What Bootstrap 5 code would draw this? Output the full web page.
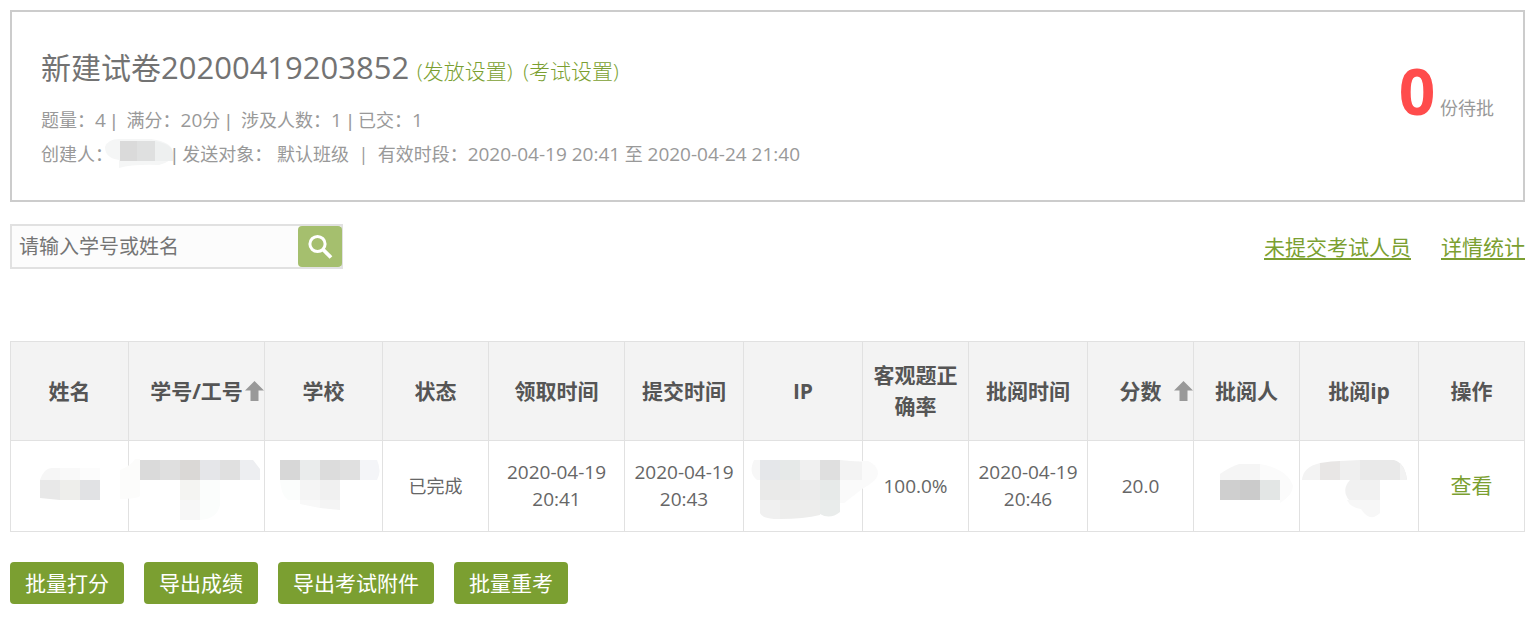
<!DOCTYPE html>
<html lang="zh-CN">
<head>
<meta charset="utf-8">
<meta name="viewport" content="width=device-width, initial-scale=1">
<title>试卷批阅</title>
<link href="https://cdn.jsdelivr.net/npm/bootstrap@5.3.0/dist/css/bootstrap.min.css" rel="stylesheet">
<style>
  body { font-family: "Open Sans", "Noto Sans CJK SC", sans-serif; color: #666; background: #fff; }
  a { color: #7b9f31; }
  a:hover { color: #5f7d22; }
  .page { padding: 10px 15px 22px 10px; }
  .exam-box { border: 2px solid #ccc; padding: 35px 29px 28px; }
  .exam-title { font-size: 30px; line-height: 40px; margin-bottom: 13px; color: #737373; font-weight: 400; }
  .exam-title .num { font-size: 31px; }
  .exam-title a { font-size: 21px; text-decoration: none; font-weight: 300; }
  .exam-title a + a { margin-left: 3px; }
  .meta { font-size: 18px; line-height: 33px; color: #999; }
  .num { font-size: 19px; }
  .bar { font-family: "Liberation Sans", sans-serif; padding: 0 1px; }
  .pending { font-size: 18px; line-height: 88px; color: #999; }
  .pending strong { font-size: 64px; color: #ff4c4c; }
  .toolbar { margin-top: 22px; }
  .search { width: 333px; height: 45px; border: 2px solid #e1e1e1; background: #fcfcfc; }
  .search .form-control { font-size: 20px; padding: 0 7px; border: 0; border-radius: 0; background: transparent; min-width: 0; line-height: 40px; }
  .search .form-control::placeholder { color: #757575; opacity: 1; }
  .search button { width: 44px; margin-right: -1px; border: 0; border-radius: 4px; background: #a5bf6e; padding: 0; }
  .side-links { font-size: 21px; gap: 30px; line-height: 32px; }
  .side-links a { text-underline-offset: 3px; text-decoration-thickness: 2px; }
  .result-table { table-layout: fixed; margin: 72px 0 30px; border-color: #e1e1e1; text-align: center; color: #666; }
  .result-table th { position: relative; height: 99px; padding: 0 9px; background: #f3f3f3; font-size: 21px; line-height: 31px; color: #555; border-bottom-color: #ececec; vertical-align: middle; }
  .result-table td { height: 91px; padding: 0 8px; font-size: 18px; line-height: 27px; color: #666; vertical-align: middle; }
  .result-table td.masked { padding: 0; }
  .result-table td a { font-size: 21px; text-decoration: none; }
  .masked svg { display: block; width: 100%; height: 90px; overflow: visible; position: relative; }
  .sort { position: absolute; right: 0; top: 39px; border: 0; padding: 0; background: none; line-height: 0; }
  .w-a { width: 106px; } .w-b { width: 118px; } .w-c { width: 119px; } .w-d { width: 136px; }
  .actions { gap: 20px; }
  .actions .btn { --bs-btn-color: #fff; --bs-btn-bg: #7b9f31; --bs-btn-hover-color: #fff; --bs-btn-hover-bg: #6a8a28; font-size: 21px; line-height: 42px; padding: 0 15px; border: 0; border-radius: 4px; }
</style>
</head>
<body>
<main class="page">
  <section class="exam-box d-flex justify-content-between">
    <div>
      <h1 class="exam-title">新建试卷<span class="num">20200419203852</span> <a href="#">(发放设置)</a> <a href="#">(考试设置)</a></h1>
      <div class="meta">题量：<span class="num">4</span> <span class="bar">|</span>&nbsp; 满分：<span class="num">20</span>分 <span class="bar">|</span>&nbsp; 涉及人数：<span class="num">1</span> <span class="bar">|</span> 已交：<span class="num">1</span></div>
      <div class="meta">创建人：<svg class="align-middle" width="58" height="20" viewBox="0 7 58 20" overflow="visible" aria-hidden="true"><path d="M-8 8Q-5 0 6 0H38Q60 3 60 14Q59 23 46 26Q20 25 6 29V21Q-8 19-8 8Z" fill="#f5f6f6"/><path d="M7 2H24V22H7Z" fill="#dadada"/><path d="M24 2H42V22H24Z" fill="#dfe0e0"/><path d="M42 2Q59 5 60 14V22H42Z" fill="#eef0f0"/></svg><span class="bar">|</span> 发送对象： 默认班级&nbsp; |&nbsp; 有效时段：<span class="num">2020-04-19 20:41</span> 至 <span class="num">2020-04-24 21:40</span></div>
    </div>
    <div class="pending text-nowrap"><strong>0</strong> 份待批</div>
  </section>

  <div class="toolbar d-flex justify-content-between align-items-center">
    <form class="search d-flex" role="search">
      <input class="form-control shadow-none" type="text" placeholder="请输入学号或姓名" aria-label="请输入学号或姓名">
      <button type="button" class="flex-shrink-0 d-flex align-items-center justify-content-center" aria-label="搜索">
        <svg width="26" height="26" viewBox="0 0 26 26" fill="none" stroke="#fff" aria-hidden="true"><circle cx="10.5" cy="10" r="7.6" stroke-width="3"/><path d="M16 15.5L24 23.5" stroke-width="3.8"/></svg>
      </button>
    </form>
    <nav class="side-links d-flex"><a href="#">未提交考试人员</a><a href="#">详情统计</a></nav>
  </div>

  <table class="table table-bordered result-table">
    <colgroup><col class="w-b"><col class="w-d"><col class="w-b"><col class="w-a"><col class="w-d"><col class="w-c"><col class="w-c"><col class="w-a"><col class="w-c"><col class="w-a"><col class="w-a"><col class="w-c"><col class="w-a"></colgroup>
    <thead>
      <tr>
        <th scope="col">姓名</th>
        <th scope="col">学号/工号<button type="button" class="sort" aria-label="按学号排序"><svg width="19" height="21" viewBox="0 0 19 21"><path d="M9.500 0L19 9.500H13.500V20H5.500V9.500H0Z" fill="#999"/></svg></button></th>
        <th scope="col">学校</th>
        <th scope="col">状态</th>
        <th scope="col">领取时间</th>
        <th scope="col">提交时间</th>
        <th scope="col">IP</th>
        <th scope="col">客观题正确率</th>
        <th scope="col">批阅时间</th>
        <th scope="col">分数<button type="button" class="sort" aria-label="按分数排序"><svg width="19" height="21" viewBox="0 0 19 21"><path d="M9.500 0L19 9.500H13.500V20H5.500V9.500H0Z" fill="#999"/></svg></button></th>
        <th scope="col">批阅人</th>
        <th scope="col">批阅ip</th>
        <th scope="col">操作</th>
      </tr>
    </thead>
    <tbody>
      <tr>
        <td class="masked"><svg aria-hidden="true"><path d="M29 39Q33 27 41 27H49V39Z" fill="#f6f6f6"/><path d="M49 27H69V39H49Z" fill="#f9f9f9"/><path d="M69 27H89V39H69Z" fill="#fcfcfc"/><path d="M29 39H49V59L29 57Z" fill="#e8e8e8"/><path d="M49 39H69V59H49Z" fill="#eeeeeb"/><path d="M69 39H89V59H69Z" fill="#e1e2e4"/></svg></td>
        <td class="masked"><svg aria-hidden="true"><path d="M-9 29Q3 24 6 18H11V55Q8 58-9 58Z" fill="#fcfcfb"/><path d="M11 19H31V39H11Z" fill="#dadada"/><path d="M31 19H51V39H31Z" fill="#dfdfdf"/><path d="M51 19H71V39H51Z" fill="#dad8d6"/><path d="M71 19H91V39H71Z" fill="#e5e6e9"/><path d="M91 19H111V39H91Z" fill="#e0e0e0"/><path d="M111 19H124L131 28V39H111Z" fill="#edeef1"/><path d="M51 39H71V59H51Z" fill="#f4f4f2"/><path d="M51 59H71V79H51Z" fill="#f7f7f7"/><path d="M71 39H91V64Q88 78 71 79Z" fill="#fbfdfc"/></svg></td>
        <td class="masked"><svg aria-hidden="true"><path d="M15 19H35V39H15Z" fill="#d7d7d7"/><path d="M35 19H55V39H35Z" fill="#eaecec"/><path d="M55 19H75V39H55Z" fill="#dcdcdc"/><path d="M75 19H95V39H75Z" fill="#e0e0e0"/><path d="M95 19H112Q117 30 112 39H95Z" fill="#f4f5f8"/><path d="M15 39H35V59H23Q16 54 15 39Z" fill="#fbfdfc"/><path d="M35 39H55V59H35Z" fill="#f4f4f4"/><path d="M55 39H75V59H55Z" fill="#f0f0f0"/><path d="M35 59H55V67L35 63Z" fill="#f8f8f8"/><path d="M55 59H75V69L55 67Z" fill="#f4f4f4"/></svg></td>
        <td>已完成</td>
        <td><span class="num">2020-04-19 20:41</span></td>
        <td><span class="num">2020-04-19 20:43</span></td>
        <td class="masked"><svg aria-hidden="true"><path d="M96 20H124Q134 24 134 33Q133 40 118 48L100 62H96Z" fill="#fafafa"/><path d="M16 19H10Q4 32 13 39H16Z" fill="#f7f7f7"/><path d="M16 19H36V39H16Z" fill="#e5e7ea"/><path d="M36 19H56V39H36Z" fill="#e6e9e8"/><path d="M56 19H76V39H56Z" fill="#f0f0f0"/><path d="M76 19H96V39H76Z" fill="#dfdfdf"/><path d="M96 19L118 21V39H96Z" fill="#f3f3f3"/><path d="M16 39H56V59H16Z" fill="#eaeae9"/><path d="M56 39H76V59H56Z" fill="#ebebeb"/><path d="M76 39H96V59H76Z" fill="#e7eae9"/><path d="M16 59H36V78Q18 78 16 72Z" fill="#f0f0f0"/><path d="M36 59H76V74Q60 78 36 78Z" fill="#ededec"/><path d="M76 59H96V71Q86 79 76 73Z" fill="#e9eceb"/></svg></td>
        <td><span class="num">100.0%</span></td>
        <td><span class="num">2020-04-19 20:46</span></td>
        <td><span class="num">20.0</span></td>
        <td class="masked"><svg aria-hidden="true"><path d="M26 39V33Q36 26 45 23H66V39Z" fill="#f5f5f5"/><path d="M66 23Q94 28 99 45Q99 54 86 62V39H66Z" fill="#fbfbfb"/><path d="M26 39H46V59H26Z" fill="#cfcfcf"/><path d="M46 39H66V59H46Z" fill="#cbcbcb"/><path d="M66 39H86V59H66Z" fill="#e3e6e5"/></svg></td>
        <td class="masked"><svg aria-hidden="true"><path d="M2 39Q3 26 20 22V39Z" fill="#f3f3f3"/><path d="M20 22Q32 20 40 20V39H20Z" fill="#e8e6e5"/><path d="M40 20L60 19V39H40Z" fill="#efefef"/><path d="M60 19H94Q105 22 107 39H60Z" fill="#e9e9e9"/><path d="M100 22Q106 29 107 39H100Z" fill="#f2f2f2"/><path d="M50 39H80V59H49Q41 49 50 39Z" fill="#f1f1f1"/><path d="M47 59H80V72Q70 82 61 68Q51 67 47 59Z" fill="#f7f7f7"/></svg></td>
        <td><a href="#">查看</a></td>
      </tr>
    </tbody>
  </table>

  <div class="actions d-flex flex-wrap">
    <button type="button" class="btn">批量打分</button>
    <button type="button" class="btn">导出成绩</button>
    <button type="button" class="btn">导出考试附件</button>
    <button type="button" class="btn">批量重考</button>
  </div>
</main>
<script src="https://cdn.jsdelivr.net/npm/bootstrap@5.3.0/dist/js/bootstrap.bundle.min.js"></script>
</body>
</html>
